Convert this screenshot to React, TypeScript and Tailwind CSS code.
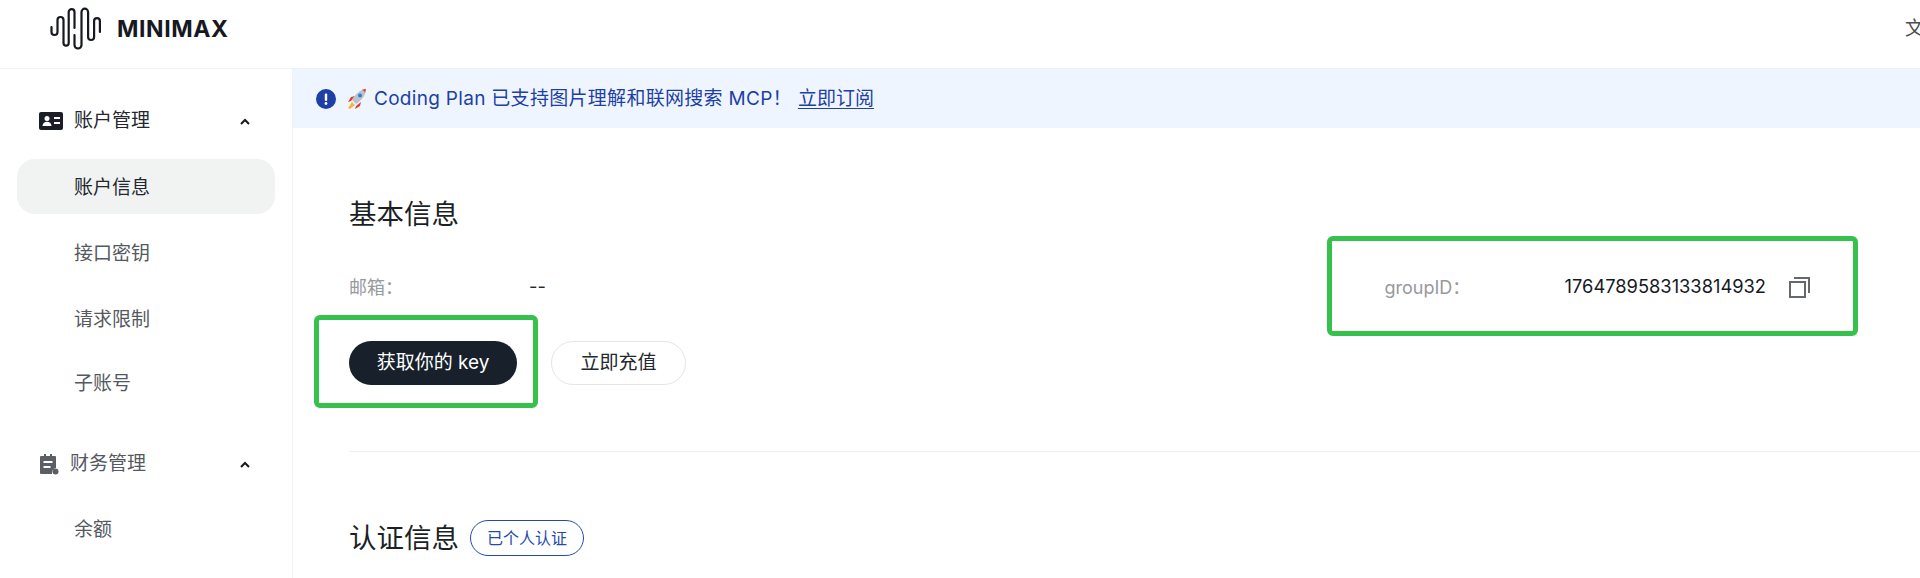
const cjk = "font-['Inter','Noto_Sans_CJK_SC',sans-serif]"

function Logo() {
  return (
    <svg width="52" height="46" viewBox="0 0 52 46" fill="none" stroke="#16191f" strokeWidth="2.2" strokeLinecap="round">
      <path d="M1.5 21v5a3 3 0 0 0 6 0V14a3 3 0 0 1 6 0v23a2.6 2.6 0 0 0 5.2 0V6a2.9 2.9 0 0 1 5.8 0v16" />
      <path d="M24.500 29v10a3.500 3.500 0 0 0 7 0V6a3.300 3.300 0 0 1 6.600 0v25a3 3 0 0 0 6 0V15a2.900 2.900 0 0 1 5.800 0v11" />
    </svg>
  )
}

function CardIcon() {
  return (
    <svg width="24" height="18" viewBox="0 0 24 18">
      <rect width="24" height="18" rx="2" fill="#1a1f27" />
      <circle cx="8" cy="6.500" r="2.500" fill="#fff" />
      <path d="M3.500 14c.3-3 2-4.200 4.500-4.200s4.200 1.200 4.500 4.200z" fill="#fff" />
      <rect x="15" y="5" width="6" height="2" fill="#fff" />
      <rect x="15" y="10" width="6" height="2" fill="#fff" />
    </svg>
  )
}

function BillIcon() {
  return (
    <svg width="20" height="21" viewBox="0 0 20 21">
      <path d="M2 2h3V0h2v2h4V0h2v2h3a1 1 0 0 1 1 1v11a5 5 0 0 0-4 5v1H2a1 1 0 0 1-1-1V3a1 1 0 0 1 1-1z" fill="#5b5e63" />
      <rect x="4.500" y="7" width="9" height="2" fill="#fff" />
      <rect x="4.500" y="12" width="7" height="2" fill="#fff" />
      <circle cx="16.500" cy="17.500" r="3" fill="#5b5e63" />
    </svg>
  )
}

function Caret() {
  return (
    <svg width="10" height="7" viewBox="0 0 10 7" fill="none" stroke="#16191f" strokeWidth="2">
      <path d="M1 6l4-4 4 4" />
    </svg>
  )
}

function Rocket() {
  return (
    <svg width="20" height="22" viewBox="0 0 20 22">
      <path d="M4 13l-3 1 3-5 4-1z" fill="#d9412f" />
      <path d="M9 18l-1 3 5-3 1-4z" fill="#d9412f" />
      <path d="M5 12C8 6 13 2 19 1c0 6-4 11-10 15z" fill="#b9c3d0" />
      <path d="M15 1.800c1 .3 2.500 1.500 3 3l1-4z" fill="#d9412f" />
      <circle cx="13" cy="7.500" r="2" fill="#3f78c4" />
      <path d="M5 14l3 3-5 4-2-1z" fill="#f6b73c" />
    </svg>
  )
}

function NavItem({ label, active }: { label: string; active?: boolean }) {
  return (
    <div
      className={`mx-[17px] h-[55px] rounded-[18px] pl-[57px] pt-[3px] flex items-center text-[19px] ${
        active ? "bg-[#f1f3f3] text-[#23272e]" : "text-[#55595f]"
      }`}
    >
      {label}
    </div>
  )
}

export default function App() {
  return (
    <div className={`w-[1920px] h-[578px] overflow-hidden bg-white flex flex-col ${cjk}`}>
      {/* Top bar */}
      <header className="h-[69px] shrink-0 border-b border-[#f0f1f2] flex items-center justify-between pl-[50px]">
        <div className="flex items-center gap-[15px] -mt-[10px]">
          <Logo />
          <span className="text-[23px] font-bold tracking-[0.6px] text-[#16191f]">MINIMAX</span>
        </div>
        <span className="text-[19px] text-[#4b4f55] w-[15px] overflow-hidden whitespace-nowrap -mt-[10px]">文</span>
      </header>

      <div className="flex flex-1 min-h-0">
        {/* Sidebar */}
        <aside className="w-[293px] shrink-0 border-r border-[#f0f1f2]">
          <div className="h-[90px] pt-[14px] pl-[39px] pr-[42px] flex items-center gap-[11px] text-[19px] text-[#23272e]">
            <CardIcon />
            <span className="flex-1">账户管理</span>
            <Caret />
          </div>
          <NavItem label="账户信息" active />
          <div className="h-[11px]" />
          <NavItem label="接口密钥" />
          <div className="h-[11px]" />
          <NavItem label="请求限制" />
          <div className="h-[9px]" />
          <NavItem label="子账号" />
          <div className="h-[52px] pl-[39px] pr-[42px] mt-[28px] flex items-center gap-[11px] text-[19px] text-[#55595f]">
            <BillIcon />
            <span className="flex-1">财务管理</span>
            <Caret />
          </div>
          <div className="h-[11px]" />
          <NavItem label="余额" />
        </aside>

        {/* Main */}
        <main className="flex-1 min-w-0">
          <div className="h-[59px] bg-[#eff5fe] pl-[23px] flex items-center text-[19px] tracking-[0.3px] text-[#1d3fa6]">
            <svg width="20" height="20" viewBox="0 0 20 20" className="mr-[11px]">
              <circle cx="10" cy="10" r="10" fill="#1d3fa6" />
              <rect x="8.800" y="4.500" width="2.400" height="7.500" rx="1" fill="#fff" />
              <circle cx="10" cy="14.500" r="1.400" fill="#fff" />
            </svg>
            <Rocket />
            <span className="ml-[7px] pt-[2px]">Coding Plan 已支持图片理解和联网搜索 MCP！</span>
            <a className="ml-[6px] pt-[2px] tracking-normal underline underline-offset-[3px]">立即订阅</a>
          </div>

          <div className="pl-[56px]">
            <h2 className="text-[27.5px] leading-[40px] mt-[66px] text-[#1b1f26]">基本信息</h2>

            <div className="flex justify-between mt-[39px] h-[28px] items-center text-[18.3px]">
              <div className="flex items-center">
                <span className="w-[180px] text-[#97999d] text-[18px]">邮箱：</span>
                <span className="text-[#23272e]">--</span>
              </div>
              <div className="relative flex items-center mr-[110px]">
                <span className="w-[180px] text-[#97999d] text-[18px]">groupID：</span>
                <span className="text-[#16191f]">1764789583133814932</span>
                <svg width="21" height="21" viewBox="0 0 21 21" fill="none" stroke="#65686d" strokeWidth="2" className="ml-[23px]">
                  <rect x="1" y="5" width="15" height="15" />
                  <path d="M5 1h15v15" />
                </svg>
                <div className="absolute left-[-58px] right-[-48px] top-[-37px] bottom-[-35px] border-[5px] border-[#36c04c] rounded-[6px]" />
              </div>
            </div>

            <div className="flex items-center gap-[34px] mt-[40px]">
              <div className="relative">
                <button className="w-[168px] h-[44px] rounded-full bg-[#17202b] text-white text-[19px]">获取你的 key</button>
                <div className="absolute left-[-35px] right-[-21px] top-[-26px] bottom-[-23px] border-[5px] border-[#36c04c] rounded-[6px]" />
              </div>
              <button className="w-[135px] h-[44px] rounded-full border border-[#e3e5e7] text-[#23272e] text-[19px]">立即充值</button>
            </div>

            <div className="border-t border-[#eef0f1] mt-[66px]" />

            <div className="flex items-center gap-[11px] mt-[68px]">
              <h2 className="text-[27.5px] leading-[36px] text-[#1b1f26]">认证信息</h2>
              <span className="w-[114px] h-[36px] rounded-full border-[1.500px] border-[#2449b0] text-[#2449b0] text-[16px] flex items-center justify-center">已个人认证</span>
            </div>
          </div>
        </main>
      </div>
    </div>
  )
}
